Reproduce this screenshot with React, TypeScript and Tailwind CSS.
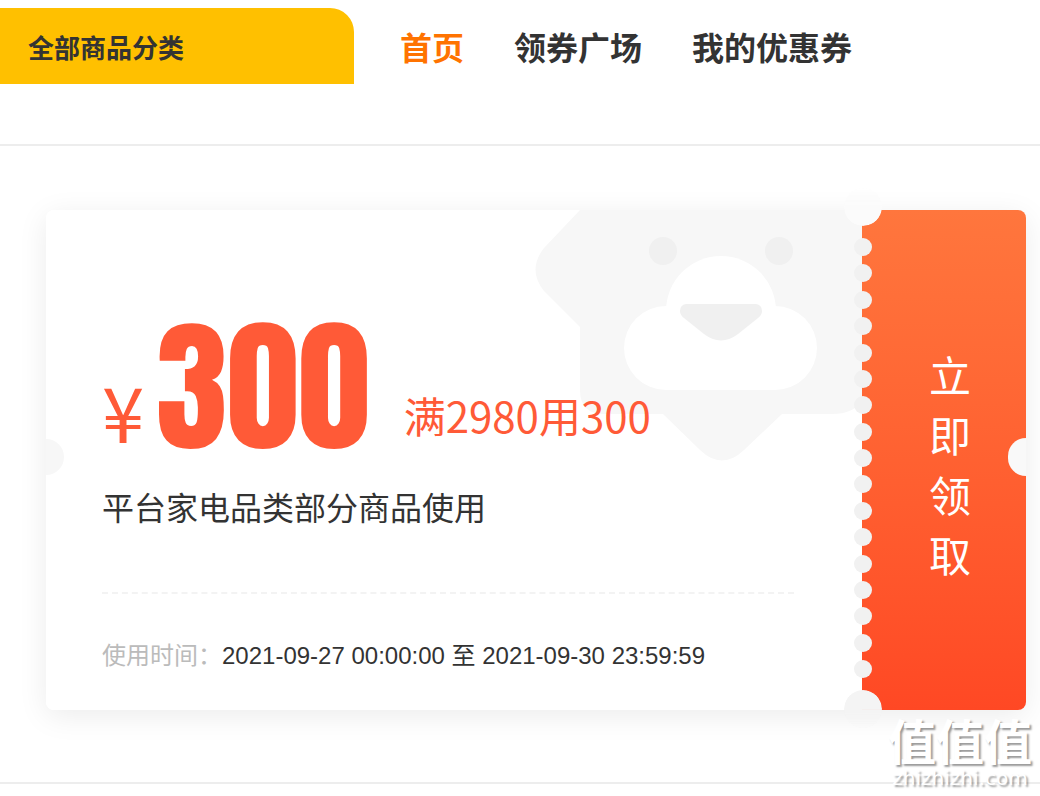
import clsx from 'clsx';

interface NavItem {
  label: string;
  active?: boolean;
}

interface Coupon {
  amount: number;
  condition: string;
  scope: string;
  start: string;
  end: string;
}

const navItems: NavItem[] = [
  { label: '首页', active: true },
  { label: '领券广场' },
  { label: '我的优惠券' },
];

const coupon: Coupon = {
  amount: 300,
  condition: '满2980用300',
  scope: '平台家电品类部分商品使用',
  start: '2021-09-27 00:00:00',
  end: '2021-09-30 23:59:59',
};

const HOLES = 17;

function LionMark() {
  return (
    <svg
      className="absolute top-0 right-0 h-[252px] w-[330px]"
      viewBox="0 0 330 252"
      aria-hidden="true"
    >
      <path
        d="M48 0 L12 38 Q-5 60 12 81 L48 117 V180 Q48 204 72 204 H131 L168 240 Q190 261 212 240 L250 204 H300 Q322 204 330 190 V0 Z"
        fill="#f7f7f7"
      />
      <circle cx="131" cy="41" r="14" fill="#f0f0f0" />
      <circle cx="247" cy="41" r="14" fill="#f0f0f0" />
      <circle cx="189" cy="101" r="55" fill="#fff" />
      <rect x="92" y="96" width="193" height="84" rx="42" fill="#fff" />
      <path
        d="M154 94 H224 Q230 95 230 101 Q230 105 226 108 L206 124 Q189 137 172 124 L152 108 Q148 105 148 101 Q148 95 154 94 Z"
        fill="#f0f0f0"
      />
    </svg>
  );
}

function Header() {
  return (
    <header className="flex items-start border-b-2 border-[#ededed] pt-2 pb-[60px]">
      <button
        type="button"
        className="h-[76px] w-[354px] shrink-0 rounded-tr-3xl bg-[#ffc000] px-7 text-left text-[26px] font-bold text-[#333]"
      >
        全部商品分类
      </button>
      <nav className="ml-[46px] flex h-[76px] items-center gap-[50px] text-[32px] font-bold whitespace-nowrap">
        {navItems.map((item) => (
          <a
            key={item.label}
            href="#"
            className={clsx(item.active ? 'text-[#ff7300]' : 'text-[#333]')}
          >
            {item.label}
          </a>
        ))}
      </nav>
    </header>
  );
}

function CouponCard({ amount, condition, scope, start, end }: Coupon) {
  return (
    <article className="relative flex rounded-lg shadow-[0_6px_30px_rgba(0,0,0,0.08)]">
      <div className="relative min-w-0 flex-1 overflow-hidden rounded-l-lg bg-white pt-[114px] pr-[68px] pb-[34px] pl-14">
        <LionMark />
        <div className="absolute top-[229px] -left-[18px] size-9 rounded-full bg-[#f7f7f7]" />

        <div className="relative flex items-end whitespace-nowrap text-[#ff5a37]">
          <span className="pb-0.5 text-[76px] leading-none">¥</span>
          <span className="ml-3 font-['Impact','Anton','Liberation_Sans_Narrow','Roboto_Condensed','Liberation_Sans',sans-serif] text-[144px] leading-[126px]">
            {amount}
          </span>
          <span className="ml-[34px] pb-3.5 text-[42px] leading-none">{condition}</span>
        </div>
        <p className="relative mt-8 text-[32px] leading-[48px] text-[#333]">{scope}</p>

        <div className="mt-[62px] border-t-2 border-dashed border-[#f3f3f3] pt-10">
          <p className="text-2xl leading-10 whitespace-nowrap text-[#bbb]">
            使用时间：
            <span className="font-['Liberation_Sans','Noto_Sans_CJK_SC',sans-serif] text-[#333]">
              {start} 至 {end}
            </span>
          </p>
        </div>
      </div>

      <button
        type="button"
        className="flex w-[164px] shrink-0 items-center justify-center rounded-r-lg bg-linear-to-b from-[#ff763d] to-[#ff4824] pt-2 pl-3 text-white"
      >
        <span className="w-[42px] text-[42px] leading-[60px] break-all">立即领取</span>
      </button>

      {/* perforation between the two halves */}
      <div className="absolute top-7 right-[154px] bottom-8 flex flex-col justify-between">
        {Array.from({ length: HOLES }, (_, i) => (
          <span key={i} className="size-[18px] rounded-full bg-[#f1f1f1]" />
        ))}
      </div>
      <div className="absolute -top-[22px] right-[144px] size-[38px] rounded-full bg-[#fbfbfb] mask-t-from-50% mask-t-to-100%" />
      <div className="absolute -bottom-[18px] right-[144px] size-[38px] rounded-full bg-[#f4f4f4] mask-b-from-50% mask-b-to-100%" />
      <div className="absolute top-[228px] right-0 h-[38px] w-[18px] rounded-l-full bg-[#f9f9f9]" />
    </article>
  );
}

function Watermark() {
  return (
    <div className="absolute right-2 bottom-1.5 text-center text-white [text-shadow:2px_2px_2px_rgba(0,0,0,0.4)]">
      <div className="text-5xl leading-[54px] font-bold">值值值</div>
      <div className="font-['DejaVu_Sans',sans-serif] text-xl leading-6">zhizhizhi.com</div>
    </div>
  );
}

export default function App() {
  return (
    <div className="relative overflow-hidden bg-white pb-3 font-['Noto_Sans_CJK_SC',sans-serif]">
      <Header />
      <main className="border-b-2 border-[#ededed] pt-16 pr-[14px] pb-[72px] pl-[46px]">
        <CouponCard {...coupon} />
      </main>
      <Watermark />
    </div>
  );
}
